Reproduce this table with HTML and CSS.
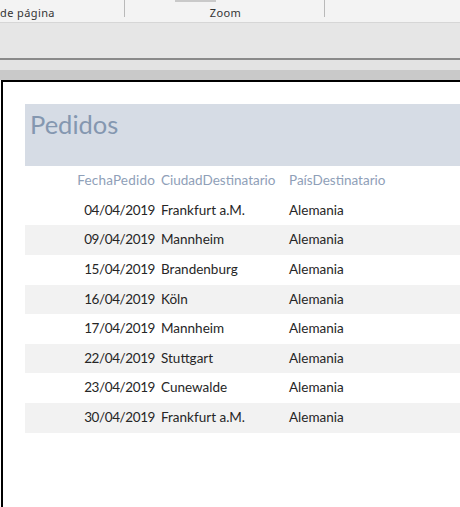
FILE: index.html
```html
<!DOCTYPE html>
<html lang="es">
<head>
<meta charset="utf-8">
<title>Pedidos</title>
<link rel="stylesheet" href="styles.css">
</head>
<body>
<div class="ribbon">
  <div class="group g1">
    <div class="frag"></div>
    <div class="label">de página</div>
  </div>
  <div class="sep"></div>
  <div class="group g2">
    <div class="frag"><span class="hl"></span></div>
    <div class="label center">Zoom</div>
  </div>
  <div class="sep"></div>
  <div class="group g3"></div>
</div>
<div class="toolbar"></div>
<div class="rule"></div>
<div class="strip1"></div>
<div class="strip2"></div>
<div class="page">
  <div class="title">Pedidos</div>
  <div class="row head">
    <div class="c1">FechaPedido</div>
    <div class="c2">CiudadDestinatario</div>
    <div class="c3">PaísDestinatario</div>
  </div>
  <div class="row"><div class="c1">04/04/2019</div><div class="c2">Frankfurt a.M.</div><div class="c3">Alemania</div></div>
  <div class="row alt"><div class="c1">09/04/2019</div><div class="c2">Mannheim</div><div class="c3">Alemania</div></div>
  <div class="row"><div class="c1">15/04/2019</div><div class="c2">Brandenburg</div><div class="c3">Alemania</div></div>
  <div class="row alt"><div class="c1">16/04/2019</div><div class="c2">Köln</div><div class="c3">Alemania</div></div>
  <div class="row"><div class="c1">17/04/2019</div><div class="c2">Mannheim</div><div class="c3">Alemania</div></div>
  <div class="row alt"><div class="c1">22/04/2019</div><div class="c2">Stuttgart</div><div class="c3">Alemania</div></div>
  <div class="row"><div class="c1">23/04/2019</div><div class="c2">Cunewalde</div><div class="c3">Alemania</div></div>
  <div class="row alt"><div class="c1">30/04/2019</div><div class="c2">Frankfurt a.M.</div><div class="c3">Alemania</div></div>
</div>
</body>
</html>
```
FILE: styles.css
```css
html, body {
  margin: 0;
  padding: 0;
}
body {
  width: 460px;
  height: 507px;
  overflow: hidden;
  background: #ffffff;
  font-family: Lato, "Liberation Sans", sans-serif;
}

/* ribbon */
.ribbon {
  display: flex;
  height: 22px;
  background: #f3f3f3;
  border-bottom: 1px solid #d6d6d6;
  font-family: "Noto Sans", "Open Sans", sans-serif;
  font-size: 11px;
  color: #333333;
}
.group {
  display: flex;
  flex-direction: column;
}
.g1 { width: 124px; }
.g2 { width: 199px; }
.g3 { flex: 1; }
.sep {
  width: 1px;
  height: 17px;
  background: #b9b9b9;
}
.frag {
  height: 3px;
  display: flex;
  align-items: flex-start;
}
.hl {
  display: block;
  width: 41px;
  height: 2px;
  margin-left: 50px;
  background: #c9c9c9;
}
.label {
  line-height: 19px;
  height: 19px;
  white-space: nowrap;
  letter-spacing: 0.4px;
}
.center { text-align: center; padding-left: 2px; }

.toolbar {
  height: 35px;
  background: #e6e6e6;
}
.rule {
  height: 2px;
  background: #8a8a8a;
}
.strip1 {
  height: 10px;
  background: #e3e3e3;
}
.strip2 {
  height: 10px;
  background: #c9c9c9;
}

/* report page */
.page {
  margin-left: 1px;
  border-left: 2px solid #000000;
  border-top: 2px solid #000000;
  padding: 22px 0 0 22px;
  height: 403px;
  background: #ffffff;
}
.title {
  height: 62px;
  box-sizing: border-box;
  padding: 5px 0 0 5px;
  line-height: 31px;
  font-size: 25.5px;
  color: #8497b0;
  background: #d6dce5;
}
.row {
  display: grid;
  grid-template-columns: 130px 122px 1fr;
  column-gap: 6px;
  height: 29.625px;
  line-height: 29.625px;
  font-size: 13.5px;
  color: #262626;
  white-space: nowrap;
}
.row.alt {
  background: #f2f2f2;
}
.row .c1 {
  text-align: right;
  letter-spacing: -0.4px;
}
.row.head {
  color: #8fa0b8;
}
.row.head .c1 {
  letter-spacing: 0.2px;
}
```
